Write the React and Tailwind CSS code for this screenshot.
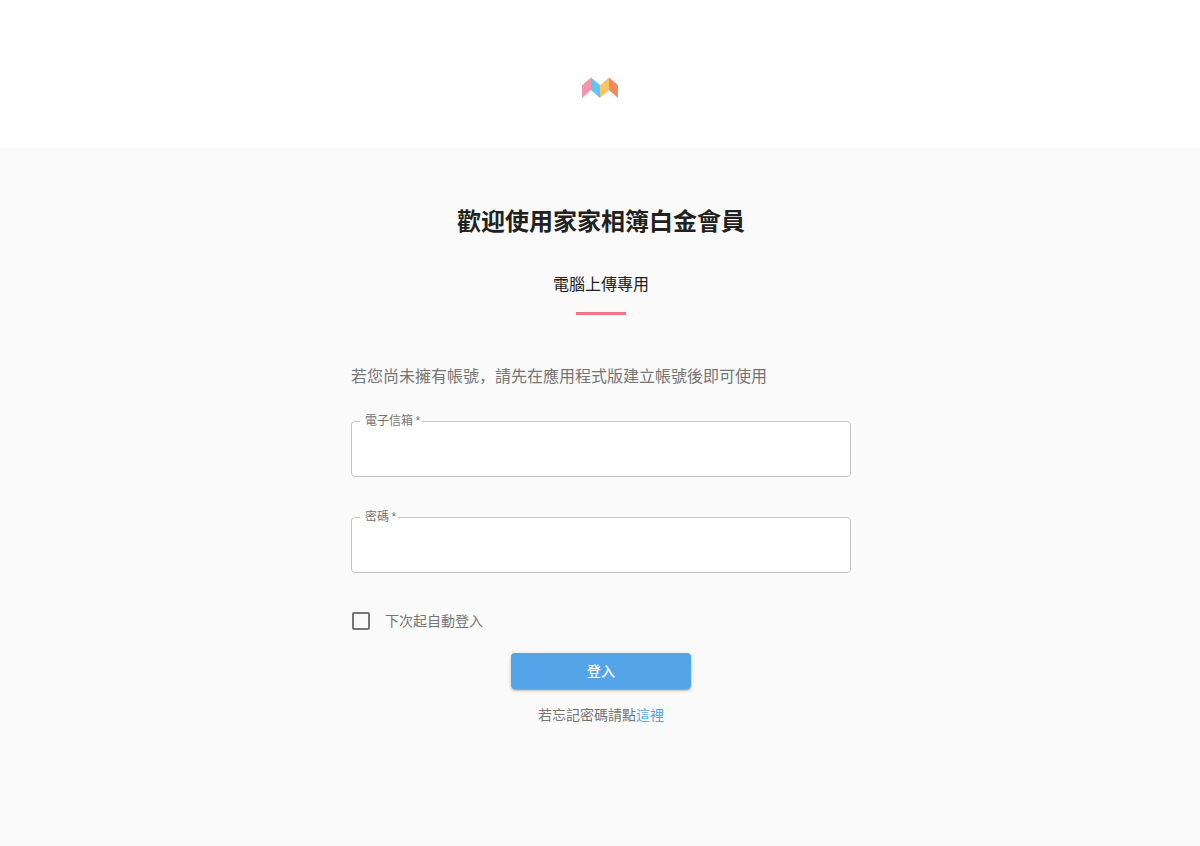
function Logo() {
  return (
    <svg width="36" height="21" viewBox="0 0 36 21" role="img" aria-label="家家相簿">
      <polygon points="0,8.3 9,0.5 9,13 0,21" fill="#f196b0" />
      <polygon points="9,0.5 18,8.3 18,21 9,13" fill="#5fc5f1" />
      <polygon points="18,8.3 27,0.5 27,13 18,21" fill="#f8c566" />
      <polygon points="27,0.5 36,8.3 36,21 27,13" fill="#f28a60" />
    </svg>
  );
}

function OutlinedField({ id, label, type, autoComplete }) {
  return (
    <fieldset className="w-full rounded border border-[#c4c4c4] bg-white pl-2">
      <legend className="h-3 pr-0.5 pl-[5px] text-xs leading-3 text-[#757575]">
        <label htmlFor={id}>
          {label}
          <span aria-hidden="true">{"\u2009*"}</span>
        </label>
      </legend>
      <input
        id={id}
        type={type}
        autoComplete={autoComplete}
        required
        className="block h-[49px] w-full bg-transparent px-[5px] text-base text-[#212121] outline-none"
      />
    </fieldset>
  );
}

export default function App() {
  return (
    <div className="flex min-h-screen flex-col bg-[#fafafa] font-['Liberation_Sans','Noto_Sans_CJK_SC',sans-serif] text-[#212121]">
      <header className="flex justify-center bg-white pt-[77px] pb-[50px]">
        <Logo />
      </header>

      <main className="flex flex-1 flex-col items-center pt-[58px] pl-0.5">
        <h1 className="text-2xl font-bold">歡迎使用家家相簿白金會員</h1>
        <h2 className="mt-[35px] text-base">電腦上傳專用</h2>
        <div className="mt-[15px] h-[3px] w-[50px] bg-[#f07588]" />

        <form className="mt-[50px] w-full max-w-[500px]" onSubmit={(e) => e.preventDefault()}>
          <p className="text-base text-[#757575]">若您尚未擁有帳號，請先在應用程式版建立帳號後即可使用</p>

          <div className="mt-[26px] flex flex-col gap-[34px]">
            <OutlinedField id="email" label="電子信箱" type="email" autoComplete="email" />
            <OutlinedField id="password" label="密碼" type="password" autoComplete="current-password" />
          </div>

          <div className="mt-9 flex h-6 items-center gap-[15px] pl-px">
            <input
              id="remember"
              type="checkbox"
              className="size-[18px] appearance-none rounded-xs border-2 border-[#757575] checked:bg-[#757575]"
            />
            <label htmlFor="remember" className="text-sm text-[#757575]">
              下次起自動登入
            </label>
          </div>

          <div className="mt-5 flex flex-col items-center gap-4">
            <button
              type="submit"
              className="h-9 w-[180px] rounded bg-[#54a4ea] text-sm font-medium text-white shadow-[0_3px_1px_-2px_rgba(0,0,0,0.2),0_2px_2px_0_rgba(0,0,0,0.14),0_1px_5px_0_rgba(0,0,0,0.12)]"
            >
              登入
            </button>
            <p className="text-sm text-[#757575]">
              若忘記密碼請點
              <a href="#reset" className="text-[#54a4ea]">
                這裡
              </a>
            </p>
          </div>
        </form>
      </main>
    </div>
  );
}
